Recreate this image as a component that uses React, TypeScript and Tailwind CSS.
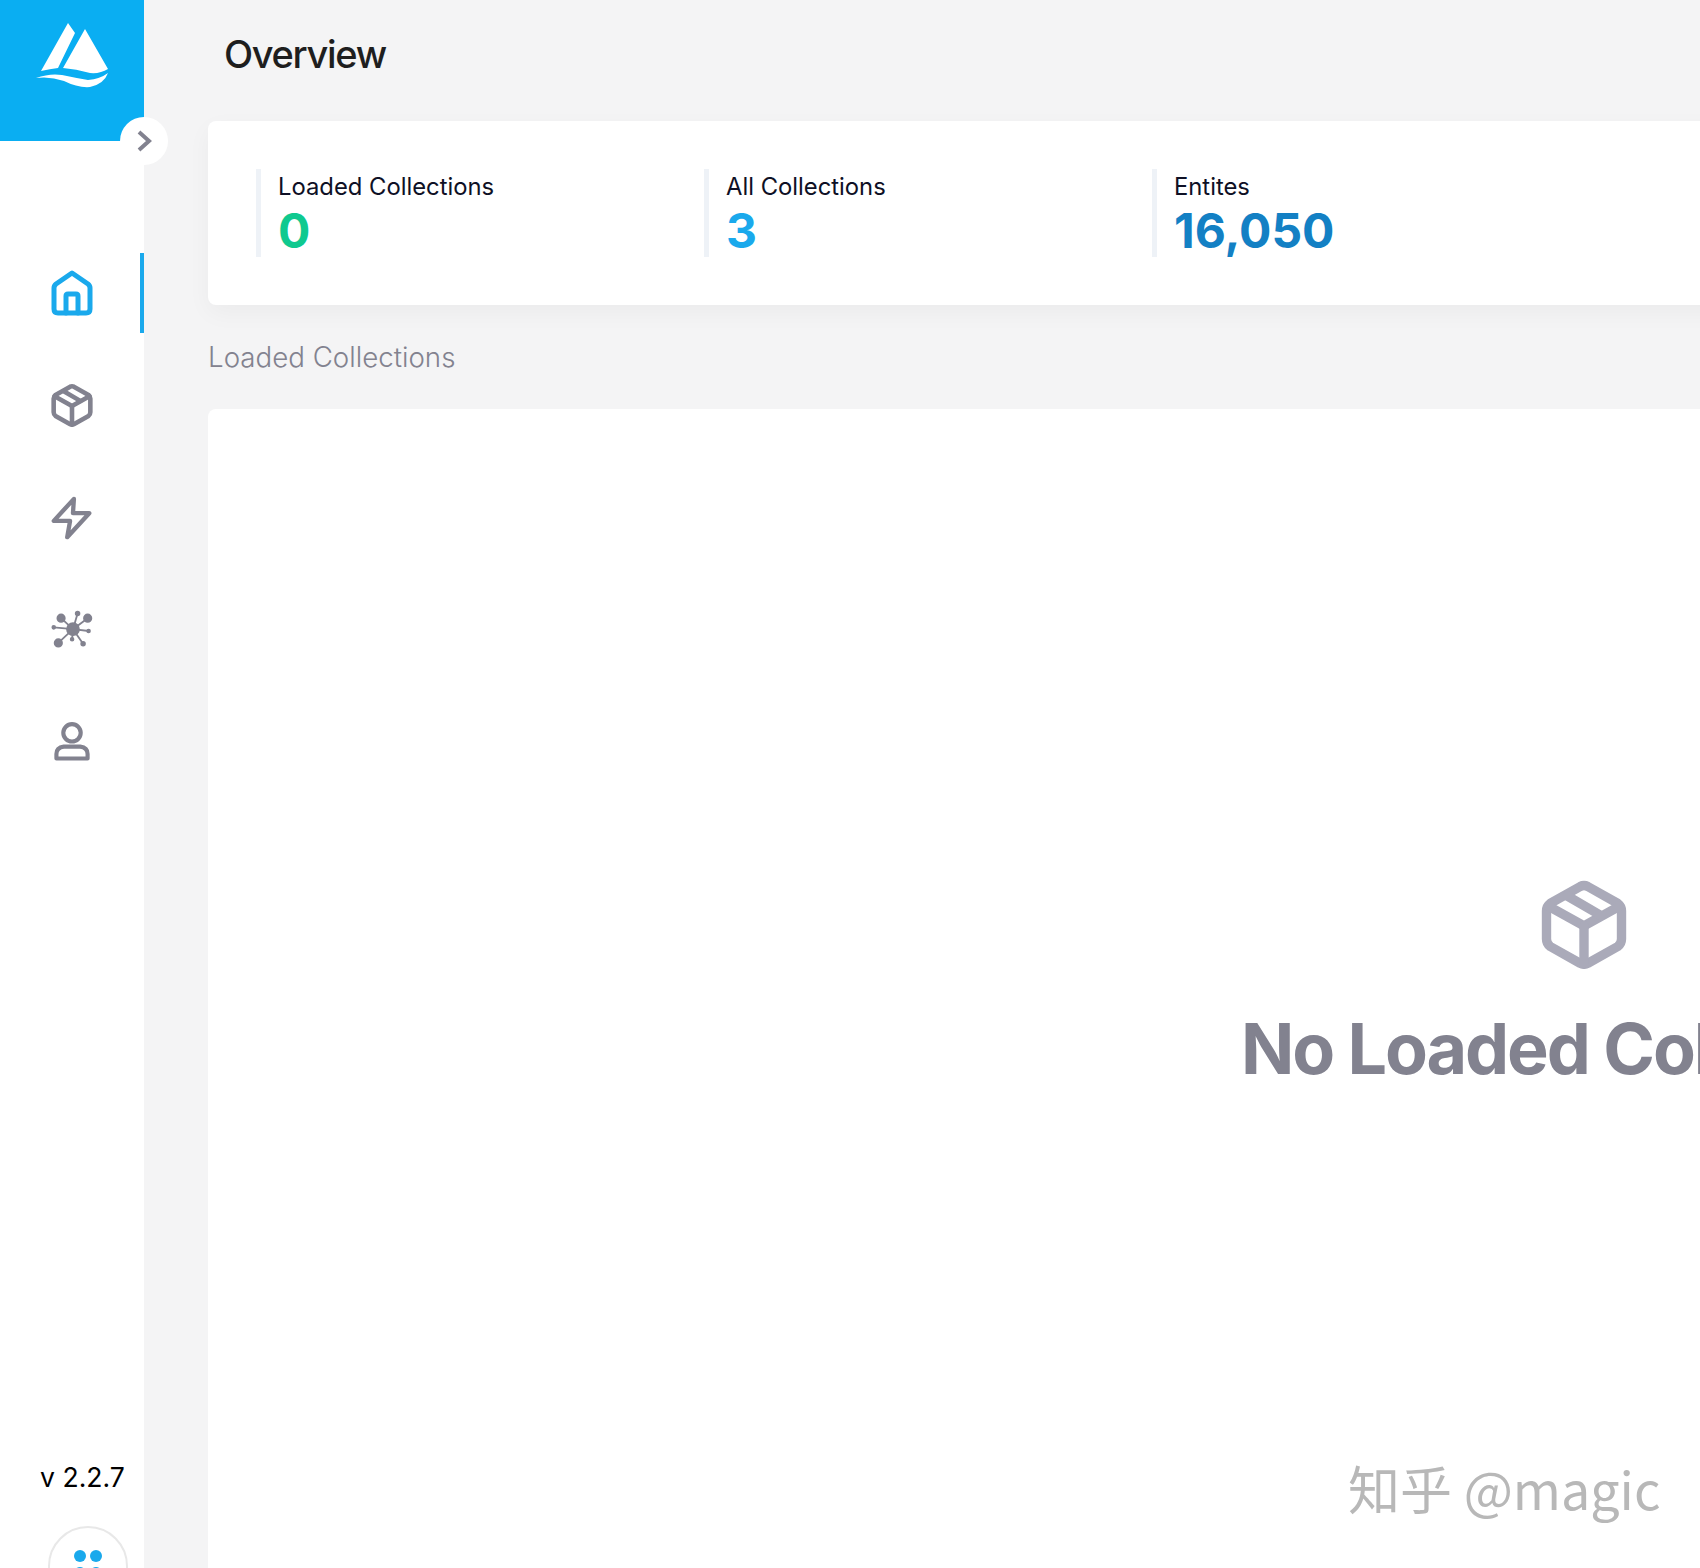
import React from 'react';

const STATS = [
  { label: 'Loaded Collections', value: '0', color: 'text-[#0fc98f]' },
  { label: 'All Collections', value: '3', color: 'text-[#1aa9ec]' },
  { label: 'Entites', value: '16,050', color: 'text-[#1380c4]' },
];

function Logo() {
  return (
    <svg width="144" height="141" viewBox="0 0 144 141" fill="white">
      <path d="M68 23 L75 33 L58 68 Q50 69 41 71 Z" />
      <path d="M85 29 L108 69 Q100 74 90 73 Q76 69 63 68 Z" />
      <path d="M36 78 Q50 73 62 75 Q76 78 88 80 Q100 79 108 73 Q104 84 90 87 Q78 88 64 81 Q50 76 36 78 Z" />
    </svg>
  );
}

function HomeIcon() {
  return (
    <svg width="46" height="48" viewBox="0 0 46 48" fill="none" stroke="currentColor" strokeWidth="5" strokeLinejoin="round" strokeLinecap="round" className="-translate-y-[1px]">
      <path d="M23 4 L39 15 Q41 16.5 41 19 V40 Q41 44 37 44 H9 Q5 44 5 40 V19 Q5 16.5 7 15 Z" />
      <path d="M17 44 V27 Q17 25 19 25 H27 Q29 25 29 27 V44" />
    </svg>
  );
}

function BoxIcon({ size = 44, width = 5 }: { size?: number; width?: number }) {
  return (
    <svg width={size} height={size} viewBox="0 0 48 48" fill="none" stroke="currentColor" strokeWidth={width} strokeLinejoin="round" strokeLinecap="round">
      <path d="M22 4 Q24 3 26 4 L42 13 Q44 14.5 44 17 V32 Q44 34.5 42 36 L26 45 Q24 46 22 45 L6 36 Q4 34.5 4 32 V17 Q4 14.5 6 13 Z" />
      <path d="M5 14.5 L24 25 L43 14.5" />
      <path d="M24 25 V45" />
      <path d="M15 9 L33 19.5" />
    </svg>
  );
}

function BoltIcon() {
  return (
    <svg width="46" height="46" viewBox="0 0 48 48" fill="none" stroke="currentColor" strokeWidth="4.5" strokeLinejoin="round" strokeLinecap="round">
      <path d="M26 4 L5 27 H22 L19 44 L42 19 H25 Z" />
    </svg>
  );
}

function GraphIcon() {
  return (
    <svg width="44" height="44" viewBox="0 0 48 48" fill="currentColor" stroke="currentColor" strokeWidth="2" className="translate-x-[1px] translate-y-[1px]">
      <path d="M24 22 L11 10 M24 22 L29 5 M24 22 L40 10 M24 22 L3 20 M24 22 L41 24 M24 22 L8 37 M24 22 L23 33 M24 22 L35 38" fill="none" />
      <circle cx="24" cy="22" r="6.5" />
      <circle cx="11" cy="10" r="4" />
      <circle cx="29" cy="5" r="2" />
      <circle cx="40" cy="10" r="4" />
      <circle cx="3" cy="20" r="1.5" />
      <circle cx="41" cy="24" r="1.5" />
      <circle cx="8" cy="37" r="4" />
      <circle cx="23" cy="33" r="1.5" />
      <circle cx="35" cy="38" r="2" />
    </svg>
  );
}

function UserIcon() {
  return (
    <svg width="44" height="44" viewBox="0 0 48 48" fill="none" stroke="currentColor" strokeWidth="4.5" strokeLinejoin="round" strokeLinecap="round">
      <circle cx="24" cy="14" r="9.5" />
      <path d="M7 42 V37 Q7 30 15 29 H33 Q41 30 41 37 V42 Z" />
    </svg>
  );
}

const NAV = [HomeIcon, () => <BoxIcon />, BoltIcon, GraphIcon, UserIcon];

export default function App() {
  return (
    <div className="relative flex h-[1568px] w-[1700px] overflow-hidden bg-[#f4f4f5] font-['Inter',sans-serif]">
      {/* Sidebar */}
      <aside className="relative flex w-[144px] shrink-0 flex-col items-center bg-white">
        <div className="h-[141px] w-full bg-[#0aaef2]">
          <Logo />
        </div>
        <button className="absolute left-[120px] top-[117px] flex h-[48px] w-[48px] items-center justify-center rounded-full bg-white text-[#82828f]">
          <svg width="24" height="24" viewBox="0 0 24 24" fill="none" stroke="currentColor" strokeWidth="4">
            <path d="M7 3 L17 12 L7 21" />
          </svg>
        </button>

        <nav className="mt-[97px] w-full">
          {NAV.map((Icon, i) => (
            <div key={i} className={`relative flex h-[112px] items-center justify-center ${i === 0 ? 'text-[#1aa9ec]' : 'text-[#82828f]'} ${i === 1 ? 'pb-[2px]' : ''}`}>
              <Icon />
              {i === 0 && <span className="absolute right-0 top-[15px] h-[80px] w-[4px] bg-[#1aa9ec]" />}
            </div>
          ))}
        </nav>

        <div className="mt-auto ml-[21px] text-[26.6px] leading-[34px] text-black">v 2.2.7</div>
        <div className="mt-[32px] mb-[-38px] ml-[32px] flex h-[80px] w-[80px] shrink-0 justify-center rounded-full border-2 border-[#e8e8e8] pt-[22px]">
          <div className="grid h-[30px] w-[28px] grid-cols-2 gap-x-[4px] gap-y-[3px]">
            <span className="h-[12px] w-[12px] rounded-full bg-[#1aa9ec]" />
            <span className="h-[12px] w-[12px] rounded-full bg-[#1aa9ec]" />
            <span className="h-[12px] w-[12px] rounded-full bg-[#1aa9ec]" />
            <span className="h-[12px] w-[12px] rounded-full bg-[#1aa9ec]" />
          </div>
        </div>
      </aside>

      {/* Main */}
      <main className="flex min-w-0 flex-1 flex-col pl-[64px]">
        <h1 className="ml-[16px] mt-[31px] h-[90px] text-[38px] font-medium leading-[46px] tracking-[-0.035em] text-[#1e1e1e]">Overview</h1>

        <section className="flex h-[184px] w-[2752px] shrink-0 items-center rounded-[8px] bg-white pl-[48px] shadow-[0_8px_24px_rgba(0,0,0,0.04)]">
          {STATS.map((s) => (
            <div key={s.label} className="flex h-[88px] w-[448px] border-l-[5px] border-[#eef2f7] pl-[17px]">
              <div className="pt-[1px]">
                <div className="text-[23.8px] font-normal leading-[33px] text-[#0e1025]">{s.label}</div>
                <div className={`text-[48px] font-bold leading-[55px] ${s.color}`}>{s.value}</div>
              </div>
            </div>
          ))}
        </section>

        <h2 className="mt-[35px] h-[69px] text-[27.7px] font-light leading-[34px] text-[#82828f]">Loaded Collections</h2>

        <section className="flex w-[2752px] flex-1 flex-col items-center rounded-t-[8px] bg-white pt-[470px]">
          <div className="text-[#aaaab9]">
            <BoxIcon size={90} width={5} />
          </div>
          <div className="ml-[39px] mt-[38px] text-[70px] font-bold leading-[84px] tracking-[-0.03em] text-[#82828f]">No Loaded Collections</div>
        </section>
      </main>

      {/* Watermark */}
      <div className="absolute left-[1348px] top-[1456px] whitespace-nowrap font-['Noto_Sans_CJK_SC',sans-serif] text-[52px] leading-[64px] text-[#b8b8b8]">知乎 @magic</div>
    </div>
  );
}
